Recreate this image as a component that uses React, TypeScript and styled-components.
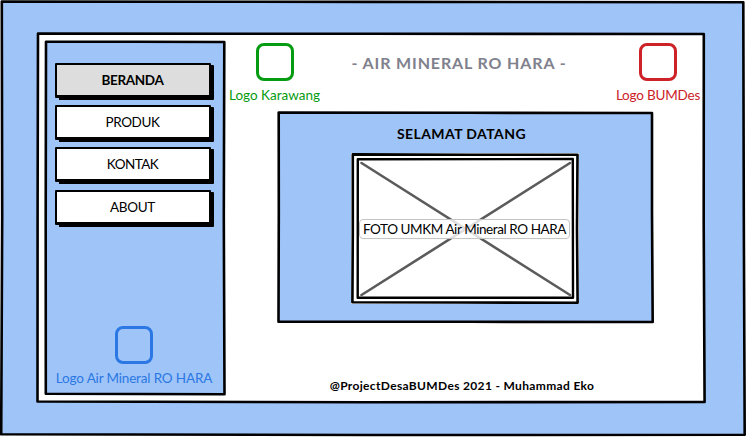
import React from 'react';
import styled, { createGlobalStyle } from 'styled-components';

const GlobalStyle = createGlobalStyle`
  *, *::before, *::after { box-sizing: border-box; }
  body {
    margin: 0;
    overflow: hidden;
    background: #fff;
    color: #000;
    font-family: Lato, 'Noto Sans', sans-serif;
  }
`;

const Stage = styled.div`
  width: 746px;
  height: 437px;
  padding: 1px;
`;

const Backdrop = styled.div`
  position: relative;
  width: 743px;
  height: 434px;
  padding: 32px 0 0 36px;
  background: #9fc4f8;
`;

const Window = styled.div`
  position: relative;
  display: flex;
  width: 668px;
  height: 369px;
  padding: 8px 0 0 8px;
  background: #fff;
`;

const Sidebar = styled.aside`
  position: relative;
  display: flex;
  flex-direction: column;
  flex: none;
  width: 179px;
  height: 353px;
  padding: 22px 10px 7px;
  background: #9fc4f8;
`;

const Nav = styled.nav`
  display: grid;
  gap: 6px;
`;

const NavButton = styled.button<{ $active?: boolean; $spacing: number }>`
  display: flex;
  align-items: center;
  justify-content: center;
  position: relative;
  z-index: 0;
  width: 159px;
  height: 36px;
  margin: 0;
  padding: 0 4px 2px 0;
  border: 0;
  background: none;
  color: #000;
  font: ${(p) => (p.$active ? 700 : 400)} 13.5px/20px Lato, sans-serif;
  letter-spacing: ${(p) => p.$spacing}px;

  &:last-child {
    margin-top: 1px;
  }

  &::before {
    content: '';
    position: absolute;
    z-index: -1;
    inset: 0 3px 1px 0;
    border: 2px solid #000;
    border-bottom-width: 3px;
    border-radius: 1px;
    background: ${(p) => (p.$active ? '#dddddd' : '#fff')};
    box-shadow: 3px 2px 0 0 #000, 1px 1px 0 0 #000;
    clip-path: polygon(0 0, 100% 0, 100% 2px, calc(100% + 3px) 2px, calc(100% + 3px) calc(100% + 2px), 4px calc(100% + 2px), 4px 100%, 0 100%);
  }
`;

const LogoBlock = styled.div<{ $color: string; $spacing?: number; $width: number }>`
  display: flex;
  flex-direction: column;
  align-items: center;
  width: ${(p) => p.$width}px;
  color: ${(p) => p.$color};
  font-size: 13.5px;
  line-height: 18px;
  letter-spacing: ${(p) => p.$spacing ?? 0}px;
  white-space: nowrap;
`;

const SidebarLogo = styled.div`
  display: flex;
  justify-content: center;
  margin-top: auto;
  margin-right: 1px;
`;

const LogoFrame = styled.div`
  width: 38px;
  height: 38px;
  margin-bottom: 5px;
  border: 3px solid currentColor;
  border-radius: 8px;
`;

const Main = styled.main`
  display: flex;
  flex-direction: column;
  flex: 1;
`;

const Header = styled.header`
  display: flex;
  flex: none;
  justify-content: space-between;
  width: 476px;
  height: 71px;
  padding: 2px 0 0 5px;
`;

const Title = styled.h1`
  margin: 10px 18px 0 0;
  color: #7f818d;
  font-size: 16px;
  line-height: 20px;
  font-weight: 700;
  letter-spacing: 0.87px;
  white-space: nowrap;
`;

const Card = styled.section`
  position: relative;
  display: flex;
  flex: none;
  flex-direction: column;
  align-items: center;
  width: 375px;
  height: 211px;
  margin-left: 54px;
  padding-top: 12px;
  background: #9fc4f8;
`;

const Welcome = styled.h2`
  margin: 0 8px 9px 0;
  font-size: 14px;
  line-height: 20px;
  font-weight: 700;
  letter-spacing: 0.42px;
`;

const PhotoFrame = styled.div`
  position: relative;
  display: grid;
  place-items: center;
  width: 228px;
  height: 151px;
  margin-right: 2px;
  background: #fff;
`;

const Caption = styled.span`
  z-index: 1;
  width: 211px;
  height: 20px;
  border: 1px solid #c4c4c4;
  border-radius: 4px;
  background: rgba(255, 255, 255, 0.8);
  font-size: 13.5px;
  line-height: 18px;
  letter-spacing: -0.42px;
  text-align: center;
  white-space: nowrap;
`;

const Footer = styled.footer`
  flex: none;
  width: 476px;
  margin: 54px 0 0;
  font-size: 12px;
  line-height: 18px;
  font-weight: 700;
  letter-spacing: 0.34px;
  text-align: center;
`;

const Drawing = styled.svg`
  position: absolute;
  top: 0;
  left: 0;
  overflow: visible;
  fill: none;
  stroke: #000;
  stroke-width: 2.6;
  stroke-linejoin: round;
  stroke-linecap: round;
  pointer-events: none;
`;

function PenStroke({ width, height, d }: { width: number; height: number; d: string }) {
  return (
    <Drawing width={width} height={height} aria-hidden="true">
      <path d={d} />
    </Drawing>
  );
}

function PhotoDrawing() {
  return (
    <Drawing width={228} height={151} aria-hidden="true">
      <path d="M1.8 1.4 L120 1.7 L226.5 1.8 L226 75 L226.6 149.8 L110 149.5 L1.4 149.2 L1.8 80 Z" />
      <path d="M6.8 6.3 L221.8 6 L222 144.8 L6.7 144.8 Z" strokeWidth={2.4} />
      <path d="M10.5 10 L219 142 M219 10 L10.5 142" stroke="#5b5b5b" />
    </Drawing>
  );
}

function Logo({ label, color, spacing, width }: { label: string; color: string; spacing?: number; width: number }) {
  return (
    <LogoBlock $color={color} $spacing={spacing} $width={width}>
      <LogoFrame />
      {label}
    </LogoBlock>
  );
}

const links = [
  { label: 'BERANDA', spacing: -0.35, active: true },
  { label: 'PRODUK', spacing: -0.4 },
  { label: 'KONTAK', spacing: -0.55 },
  { label: 'ABOUT', spacing: -0.3 },
];

export default function App() {
  return (
    <>
      <GlobalStyle />
      <Stage>
        <Backdrop>
          <Window>
            <Sidebar>
              <Nav>
                {links.map((link) => (
                  <NavButton key={link.label} $active={link.active} $spacing={link.spacing}>
                    {link.label}
                  </NavButton>
                ))}
              </Nav>
              <SidebarLogo>
                <Logo label="Logo Air Mineral RO HARA" color="#2b78e4" spacing={-0.16} width={158} />
              </SidebarLogo>
              <PenStroke width={179} height={353} d="M1 .7 L90 .8 L179.3 1 L178.8 175 L179.5 353.3 L90 353 L.8 352.8 L.7 180 Z" />
            </Sidebar>
            <Main>
              <Header>
                <Logo label="Logo Karawang" color="#069c12" width={91} />
                <Title>- AIR MINERAL RO HARA -</Title>
                <Logo label="Logo BUMDes" color="#cc2228" spacing={-0.2} width={84} />
              </Header>
              <Card>
                <Welcome>SELAMAT DATANG</Welcome>
                <PhotoFrame>
                  <PhotoDrawing />
                  <Caption>FOTO UMKM Air Mineral RO HARA</Caption>
                </PhotoFrame>
                <PenStroke width={375} height={211} d="M.7 .5 L190 .8 L374 1 L374 100 L374.7 210 L190 209.8 L.5 209.7 L.8 100 Z" />
              </Card>
              <Footer>@ProjectDesaBUMDes 2021 - Muhammad Eko</Footer>
            </Main>
            <PenStroke width={668} height={369} d="M1 .6 L330 .8 L666.8 1 L666.7 190 L667.6 369 L330 369.2 L.5 368.5 L.6 180 Z" />
          </Window>
          <PenStroke width={743} height={434} d="M.8 .5 L370 .9 L742.3 1.2 L742.8 215 L743.7 433.8 L370 434 L.2 433.3 L1.2 215 Z" />
        </Backdrop>
      </Stage>
    </>
  );
}
